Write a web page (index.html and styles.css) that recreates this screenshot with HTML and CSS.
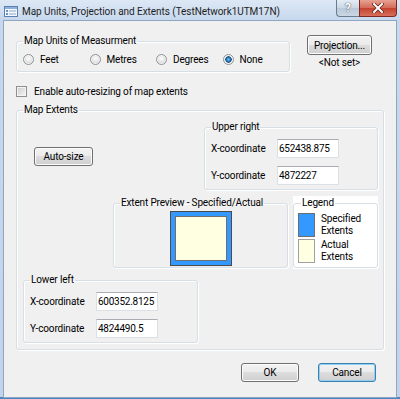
FILE: index.html
```html
<!DOCTYPE html>
<html lang="en">
<head>
  <meta charset="UTF-8">
  <title>Map Units, Projection and Extents</title>
  <link rel="stylesheet" href="styles.css">
</head>
<body>
  <div class="window">
    <div class="titlebar">
      <svg class="app-icon" width="14" height="11" viewBox="0 0 14 11">
        <rect x="0.5" y="0.5" width="13" height="10" fill="#f4f8fc" stroke="#5b7fb0"/>
        <rect x="1" y="1" width="12" height="2" fill="#8fb2dc"/>
        <rect x="2" y="4" width="2" height="2" fill="#6f92c0"/>
        <rect x="2" y="7" width="2" height="2" fill="#6f92c0"/>
        <rect x="5" y="4.5" width="7" height="1" fill="#8aa6c8"/>
        <rect x="5" y="7.5" width="7" height="1" fill="#8aa6c8"/>
      </svg>
      <span class="title">Map Units, Projection and Extents (TestNetwork1UTM17N)</span>
      <div class="caption-buttons">
        <span class="cap-btn help">?</span>
        <span class="cap-btn close">
          <svg width="12" height="10" viewBox="0 0 12 10">
            <path d="M2 1 L10 9 M10 1 L2 9" stroke="#5a1f18" stroke-width="3.4" stroke-linecap="square"/>
            <path d="M2 1 L10 9 M10 1 L2 9" stroke="#fff" stroke-width="2" stroke-linecap="square"/>
          </svg>
        </span>
      </div>
    </div>

    <div class="client">
      <div class="units-row">
        <fieldset class="group units">
          <legend>Map Units of Measurment</legend>
          <div class="radios">
            <label class="radio"><span class="dot"></span>Feet</label>
            <label class="radio"><span class="dot"></span>Metres</label>
            <label class="radio"><span class="dot"></span>Degrees</label>
            <label class="radio"><span class="dot checked"></span>None</label>
          </div>
        </fieldset>
        <div class="projection">
          <button class="btn proj">Projection...</button>
          <div class="not-set">&lt;Not set&gt;</div>
        </div>
      </div>

      <label class="check"><span class="box"></span>Enable auto-resizing of map extents</label>

      <fieldset class="group extents">
        <legend>Map Extents</legend>
        <div class="top-row">
          <button class="btn auto">Auto-size</button>
          <fieldset class="group coords upper">
            <legend>Upper right</legend>
            <div class="coord-row"><span>X-coordinate</span><input type="text" value="652438.875" readonly></div>
            <div class="coord-row"><span>Y-coordinate</span><input type="text" value="4872227" readonly></div>
          </fieldset>
        </div>

        <div class="mid-row">
          <fieldset class="group preview">
            <legend>Extent Preview - Specified/Actual</legend>
            <div class="preview-box"><div class="actual"></div></div>
          </fieldset>
          <div class="legend-panel">
            <fieldset class="group key">
              <legend>Legend</legend>
              <div class="key-row"><span class="swatch specified"></span><span>Specified<br>Extents</span></div>
              <div class="key-row"><span class="swatch actual-swatch"></span><span>Actual<br>Extents</span></div>
            </fieldset>
          </div>
        </div>

        <fieldset class="group coords lower">
          <legend>Lower left</legend>
          <div class="coord-row"><span>X-coordinate</span><input type="text" value="600352.8125" readonly></div>
          <div class="coord-row"><span>Y-coordinate</span><input type="text" value="4824490.5" readonly></div>
        </fieldset>
      </fieldset>

      <div class="actions">
        <button class="btn">OK</button>
        <button class="btn default">Cancel</button>
      </div>
    </div>
  </div>
</body>
</html>
```

FILE: styles.css
```css
* { box-sizing: border-box; margin: 0; padding: 0; }

body {
  width: 400px;
  height: 399px;
  overflow: hidden;
  font-family: Roboto, "Liberation Sans", sans-serif;
  font-size: 10px;
  letter-spacing: -0.15px;
  color: #000;
  background: #fff;
}

.window {
  width: 400px;
  height: 399px;
  display: flex;
  flex-direction: column;
  background: linear-gradient(#dde8f5, #c7d8ed 20px, #c1d4eb);
  border-bottom: 2px solid #4a86c0;
}

/* title bar */

.titlebar {
  height: 21px;
  display: flex;
  align-items: flex-start;
}

.app-icon {
  margin: 6px 0 0 4px;
}

.title {
  margin: 5px 0 0 4px;
  font-size: 10px;
  line-height: 14px;
  letter-spacing: -0.05px;
  color: #1e1e1e;
}

.caption-buttons {
  margin-left: auto;
  margin-right: 3px;
  display: flex;
}

.cap-btn {
  height: 17px;
  display: flex;
  align-items: center;
  justify-content: center;
  border: 1px solid #6b7b90;
  border-top: none;
}

.help {
  width: 23px;
  border-right: none;
  border-radius: 0 0 0 4px;
  background: linear-gradient(#e4ecf5, #ccd8e6 50%, #b9c8da 50%, #c9d6e4);
  color: #fff;
  font-weight: bold;
  font-size: 12px;
  text-shadow: 0 0 1px #3a4a5e, 0 0 1px #3a4a5e;
}

.close {
  width: 38px;
  border-color: #7d2a20;
  border-radius: 0 0 4px 0;
  background: linear-gradient(#e8a293, #d46a58 50%, #c2412c 50%, #d8705c);
}

/* client area */

.client {
  margin-left: 4px;
  width: 392px;
  flex: 1;
  background: #f0f0f0;
  box-shadow: 0 0 0 1px #8ea6c2;
}

.group {
  border: 1px solid #d5dfe5;
  border-radius: 3px;
  box-shadow: inset 1px 1px 0 #fff, 1px 1px 0 #fff;
  min-width: 0;
}

.group legend {
  margin-left: 6px;
  padding: 0 1px;
  height: 14px;
  line-height: 14px;
}

.units-row {
  display: flex;
  align-items: flex-start;
  margin-top: 13px;
}

.units {
  margin-left: 12px;
  width: 274px;
  padding: 4px 0 5px 6px;
}

.units legend,
.coords legend {
  margin-left: 0;
}

.radios {
  display: flex;
}

.radio {
  width: 72.4px;
  height: 14px;
  display: flex;
  align-items: center;
  gap: 6px;
}

.dot {
  width: 11px;
  height: 11px;
  border-radius: 50%;
  border: 1px solid #909294;
  background: radial-gradient(circle at 50% 40%, #fbfbfb 0, #f0f0f0 2px, #d2d2d2 5px);
  box-shadow: inset 0 0 0 1px #f6f6f6;
}

.dot.checked {
  background: radial-gradient(circle at 50% 50%, #7cc4f0 0, #2f86cc 1.6px, #1d4f80 3px, #e6e6e6 3.6px, #f4f4f4 5px);
}

.projection {
  margin: 1px 0 0 17px;
  width: 65px;
  display: flex;
  flex-direction: column;
  align-items: center;
}

.btn {
  font: inherit;
  letter-spacing: inherit;
  color: #000;
  height: 19px;
  width: 58px;
  border: 1px solid #707070;
  border-radius: 3px;
  background: linear-gradient(#f2f2f2, #ebebeb 50%, #dddddd 50%, #cfcfcf);
  box-shadow: inset 0 0 0 1px #fcfcfc;
}

.btn.proj {
  width: 65px;
  height: 20px;
}

.btn.default {
  border-color: #3c7fb1;
  box-shadow: inset 0 0 0 1px #8fd0f2;
}

.not-set {
  margin-top: 1px;
  line-height: 14px;
}

.check {
  margin: 12px 0 0 12px;
  height: 14px;
  display: flex;
  align-items: center;
  gap: 7px;
}

.box {
  width: 11px;
  height: 11px;
  border: 1px solid #8e8f8f;
  background: linear-gradient(135deg, #cbcbcb, #f6f6f6);
  box-shadow: inset 0 0 0 1px #f4f4f4;
}

/* map extents */

.extents {
  margin: 5px 0 0 12px;
  width: 368px;
  padding-bottom: 6px;
}

.top-row {
  display: flex;
  align-items: flex-start;
  margin-top: 3px;
}

.btn.auto {
  margin: 27px 0 0 17px;
  width: 59px;
}

.coords {
  padding: 5px 0 4px 6px;
}

.upper {
  margin-left: 111px;
  width: 174px;
}

.lower {
  margin: 4px 0 0 6px;
  width: 175px;
}

.coord-row {
  height: 19px;
  display: flex;
  align-items: center;
}

.coord-row + .coord-row {
  margin-top: 8px;
}

.coord-row span {
  width: 66px;
}

.coord-row input {
  font: inherit;
  letter-spacing: -0.25px;
  width: 62px;
  height: 19px;
  padding: 0 1px;
  background: #fff;
  border: 1px solid #dbdfe6;
  border-top-color: #abadb3;
  outline: none;
}

.mid-row {
  display: flex;
  align-items: flex-start;
  margin-top: 6px;
}

.preview {
  margin-left: 96px;
  width: 175px;
  padding: 1px 0 1px;
}

.preview-box {
  margin-left: 56px;
  width: 62px;
  height: 55px;
  border: 1px solid #4b4b4b;
  background: #3399ff;
  padding: 4px;
}

.actual {
  height: 100%;
  border: 1px solid #6e6e6e;
  background: #ffffe1;
}

.legend-panel {
  margin-left: 5px;
  width: 85px;
  height: 73px;
  background: #fff;
}

.key {
  height: 72px;
  padding: 3px 0 0 4px;
}

.key legend {
  margin-left: 3px;
  background: #fff;
}

.key-row {
  display: flex;
  align-items: center;
  gap: 6px;
  line-height: 12px;
}

.key-row + .key-row {
  margin-top: 2px;
}

.swatch {
  width: 17px;
  height: 24px;
  border: 1px solid #6e6e6e;
}

.specified { background: #3399ff; }

.actual-swatch {
  background: #ffffe1;
  border-color: #a0a0a0;
}

/* dialog buttons */

.actions {
  margin-top: 13px;
  padding-right: 20px;
  display: flex;
  justify-content: flex-end;
  gap: 19px;
}
```
